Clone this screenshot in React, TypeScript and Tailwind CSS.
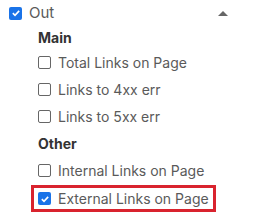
import React from 'react';

function Box({ checked }: { checked?: boolean }) {
	if (checked) {
		return (
			<span className="flex size-[13px] shrink-0 items-center justify-center rounded-[2px] bg-[#1a73e8]">
				<svg viewBox="0 0 12 12" className="size-[10px]">
					<path d="M2.2 6.2 L4.8 8.7 L9.8 3.4" fill="none" stroke="#fff" strokeWidth="2" />
				</svg>
			</span>
		);
	}
	return <span className="size-[13px] shrink-0 rounded-[2px] border border-[#666] bg-white" />;
}

function Item({ label, checked }: { label: string; checked?: boolean }) {
	return (
		<div className="flex h-[27px] items-center gap-[7px] pl-[38px]">
			<Box checked={checked} />
			<span>{label}</span>
		</div>
	);
}

export default function App() {
	return (
		<div className="h-[217px] w-[258px] bg-white text-[14px] text-[#5a5a5a] font-['Inter',sans-serif]">
			<div className="flex h-[26px] items-center pl-[9px] pr-[30px]">
				<Box checked />
				<span className="ml-[7px] text-[15px]">Out</span>
				<svg viewBox="0 0 10 5" className="ml-auto h-[5px] w-[10px]">
					<path d="M0 5 L5 0 L10 5 Z" fill="#666" />
				</svg>
			</div>
			<div className="mb-[1px] flex h-[22px] items-center pl-[38px] font-bold text-[#333]">Main</div>
			<Item label="Total Links on Page" />
			<Item label="Links to 4xx err" />
			<Item label="Links to 5xx err" />
			<div className="flex h-[27px] items-center pl-[38px] font-bold text-[#333]">Other</div>
			<Item label="Internal Links on Page" />
			<div className="ml-[31px] mt-[1px] flex h-[27px] w-[185px] items-center gap-[7px] border-[3px] border-[#d9232e] pl-[4px]">
				<Box checked />
				<span>External Links on Page</span>
			</div>
		</div>
	);
}
